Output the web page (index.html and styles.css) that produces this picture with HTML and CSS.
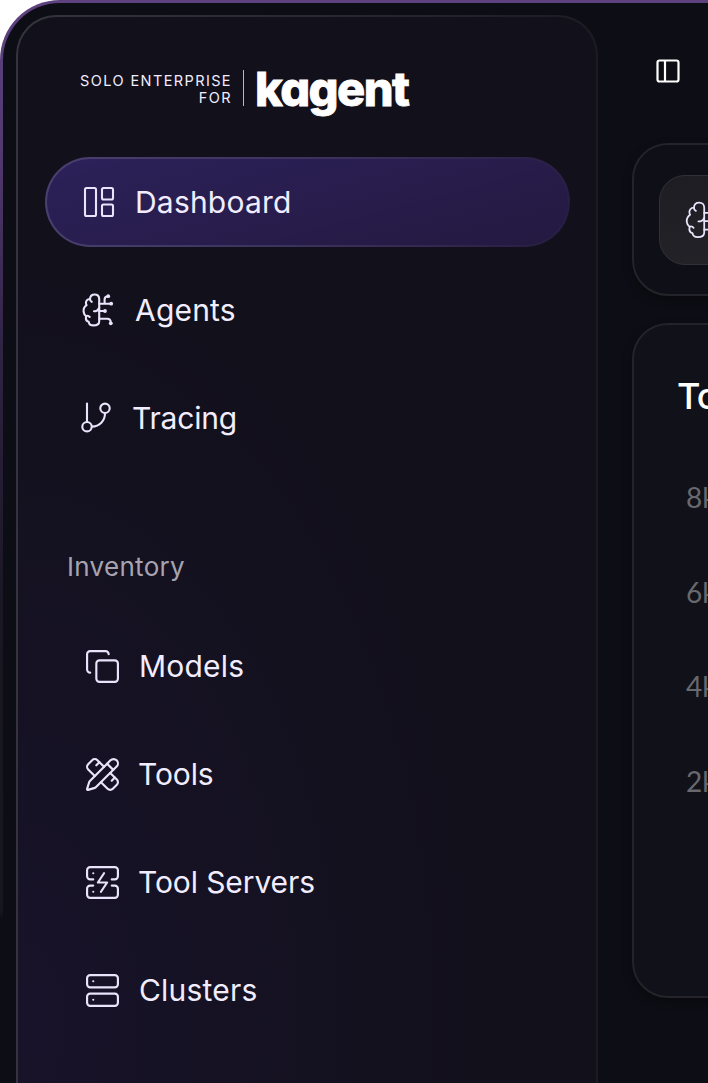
FILE: index.html
```html
<!DOCTYPE html>
<html lang="en">

<head>
    <meta charset="UTF-8">
    <meta name="viewport" content="width=device-width, initial-scale=1.0">
    <title>kagent</title>
    <link rel="stylesheet" href="styles.css">
</head>

<body>
    <!-- Shared brain icon -->
    <svg class="symbols" width="0" height="0">
        <symbol id="brain" viewBox="0 0 34 34">
            <path d="M17.2 6C17.2 3 15.4 1.5 12.7 1.5S8.2 3.2 8 6C5.2 6 3.5 8 4 10.8c.1.6.3 1 .6 1.4C2.5 13.6 1.3 16 1.6 18.7c.2 2 1 3.4 2.5 4.4C3.5 26.2 4.5 28.2 6.7 28.8 7 31.2 8.9 32.4 11.4 32.4c3.5 0 5.8-1.3 5.8-4.2z" />
            <path d="M8 6c0 1.4.6 2.3 1.7 2.8M4.1 23.1c1.2-.6 2.5-.4 3.6.9M12 18.3c2.8 0 4.3-1.4 5.2-3.3M17.2 10.7H29M22.6 10.7V6.5c0-2 1-3 2.8-3M17.2 18h5.5M17.2 25.7h8c2.7 0 3.6 1.3 3.6 4.3" />
            <g class="dots">
                <circle cx="29.2" cy="10.7" r="1.9" />
                <circle cx="26.2" cy="3.2" r="1.9" />
                <circle cx="23" cy="18" r="1.9" />
                <circle cx="28.8" cy="30.3" r="1.9" />
            </g>
        </symbol>
    </svg>

    <div class="frame">
        <div class="app">
            <aside class="sidebar">
                <div class="logo">
                    <div class="logo-small">SOLO ENTERPRISE<br>FOR</div>
                    <div class="logo-line"></div>
                    <div class="logo-name">kagent</div>
                </div>

                <nav class="nav">
                    <a class="nav-item active">
                        <svg class="icon" width="34" height="34" viewBox="0 0 34 34">
                            <rect x="3" y="3" width="11" height="28" rx="1.5" />
                            <rect x="20" y="3" width="11" height="11.5" rx="1.5" />
                            <rect x="20" y="19.5" width="11" height="11.5" rx="1.5" />
                        </svg>
                        <span>Dashboard</span>
                    </a>
                    <a class="nav-item">
                        <svg class="icon" width="34" height="34">
                            <use href="#brain" />
                        </svg>
                        <span>Agents</span>
                    </a>
                    <a class="nav-item tracing">
                        <svg class="icon" width="34" height="34" viewBox="0 0 34 34">
                            <path d="M8 2.5v18.3M26 12.3c0 7.5-5.5 13.3-13 13.3" />
                            <circle cx="8" cy="25.7" r="4.7" />
                            <circle cx="26" cy="7.3" r="4.7" />
                        </svg>
                        <span>Tracing</span>
                    </a>
                </nav>

                <h2 class="nav-title">Inventory</h2>

                <nav class="nav inventory">
                    <a class="nav-item">
                        <svg class="icon" width="37" height="37" viewBox="0 0 24 24">
                            <rect x="8" y="8" width="14" height="14" rx="2" />
                            <path d="M4 16c-1.1 0-2-.9-2-2V4c0-1.1.9-2 2-2h10c1.1 0 2 .9 2 2" />
                        </svg>
                        <span>Models</span>
                    </a>
                    <a class="nav-item tools">
                        <svg class="icon" width="37" height="37" viewBox="0 0 24 24">
                            <path d="M13 7 8.7 2.7a2.41 2.41 0 0 0-3.4 0L2.7 5.3a2.41 2.41 0 0 0 0 3.4L7 13" />
                            <path d="m8 6 2-2M18 16l2-2" />
                            <path d="m17 11 4.3 4.3c.94.94.94 2.46 0 3.4l-2.6 2.6c-.94.94-2.46.94-3.4 0L11 17" />
                            <path d="M21.174 6.812a1 1 0 0 0-3.986-3.987L3.842 16.174a2 2 0 0 0-.5.83l-1.321 4.352a.5.5 0 0 0 .623.622l4.353-1.32a2 2 0 0 0 .83-.497z" />
                            <path d="m15 5 4 4" />
                        </svg>
                        <span>Tools</span>
                    </a>
                    <a class="nav-item tools">
                        <svg class="icon" width="37" height="37" viewBox="0 0 24 24">
                            <path d="M6 10H4a2 2 0 0 1-2-2V4a2 2 0 0 1 2-2h16a2 2 0 0 1 2 2v4a2 2 0 0 1-2 2h-2" />
                            <path d="M6 14H4a2 2 0 0 0-2 2v4a2 2 0 0 0 2 2h16a2 2 0 0 0 2-2v-4a2 2 0 0 0-2-2h-2" />
                            <path d="M6 6h.01M6 18h.01M13 6l-4 6h6l-4 6" />
                        </svg>
                        <span>Tool Servers</span>
                    </a>
                    <a class="nav-item">
                        <svg class="icon" width="37" height="37" viewBox="0 0 24 24">
                            <rect x="2" y="2" width="20" height="8" rx="2" />
                            <rect x="2" y="14" width="20" height="8" rx="2" />
                            <path d="M6 6h.01M6 18h.01" />
                        </svg>
                        <span>Clusters</span>
                    </a>
                </nav>
            </aside>

            <main class="content">
                <svg class="toggle" width="24" height="24" viewBox="0 0 24 24">
                    <rect x="1.5" y="1.5" width="21" height="21" rx="2" />
                    <path d="M9 1.5v21" />
                </svg>

                <section class="card stats">
                    <div class="stat-icon">
                        <svg class="icon" width="38" height="38">
                            <use href="#brain" />
                        </svg>
                    </div>
                </section>

                <section class="card chart">
                    <h1 class="chart-title">To</h1>
                    <div class="axis">
                        <span>8k</span>
                        <span>6k</span>
                        <span>4k</span>
                        <span>2k</span>
                    </div>
                </section>
            </main>
        </div>
    </div>
</body>

</html>
```
FILE: styles.css
```css
* {
    box-sizing: border-box;
}

body {
    margin: 0;
    background: #fff;
    font-family: Inter, "Liberation Sans", sans-serif;
    color: #f1edff;
    overflow: hidden;
}

.symbols {
    display: block;
    height: 0;
}

.frame {
    height: 1083px;
    padding: 3px 0 0 3px;
    border-radius: 60px 0 0 0;
    background: linear-gradient(180deg, #5e4280 0, #52396f 150px, #302343 350px, #1b1725 600px, #17171d 910px, #0d0d14 920px);
    overflow: hidden;
}

.app {
    display: flex;
    height: 1080px;
    border-radius: 57px 0 0 0;
    background: #0d0d15;
    overflow: hidden;
}

/* Sidebar */
.sidebar {
    flex: none;
    width: 582px;
    height: 1120px;
    margin: 12px 0 0 13px;
    border: 2px solid transparent;
    border-radius: 40px;
    background:
        radial-gradient(ellipse 460px 760px at 0 90%, #18132a 0%, #12101b 100%) padding-box,
        linear-gradient(90deg, #35333d 0%, #25242c 70%, #1c1b23 100%) border-box;
}

.logo {
    display: flex;
    height: 66px;
    margin: 43px 0 0 62px;
}

.logo-small {
    width: 152px;
    padding-top: 13px;
    font-size: 14.5px;
    line-height: 16.5px;
    letter-spacing: 1.4px;
    text-align: right;
    white-space: nowrap;
}

.logo-line {
    width: 1px;
    height: 36px;
    margin: 10px 13px 0 11px;
    background: #b9b7c0;
}

.logo-name {
    margin-left: -2px;
    font-size: 47px;
    font-weight: 800;
    line-height: 58px;
    letter-spacing: -1.6px;
    color: #fff;
    font-feature-settings: "cv11";
    -webkit-text-stroke: 0.8px #fff;
}

.nav {
    display: flex;
    flex-direction: column;
    gap: 18px;
    margin: 31px 26px 0 27px;
}

.nav-item {
    display: flex;
    align-items: center;
    gap: 19px;
    height: 90px;
    padding-left: 35px;
    border: 2px solid transparent;
    border-radius: 45px;
    font-size: 30px;
    line-height: 40px;
    letter-spacing: 0.2px;
}

.nav-item.active {
    background:
        linear-gradient(165deg, #2c2159, #241940) padding-box,
        linear-gradient(110deg, #4a4070, #3c325e 50%, #271d42) border-box;
}

.nav-item.tracing {
    padding-left: 32px;
    letter-spacing: -0.2px;
}

.icon {
    flex: none;
    fill: none;
    stroke: #e9e3fb;
    stroke-width: 2.1;
    stroke-linecap: round;
    stroke-linejoin: round;
}

.dots {
    fill: #e9e3fb;
    stroke: none;
}

.nav-title {
    margin: 86px 0 0 49px;
    font-size: 26px;
    font-weight: 400;
    line-height: 36px;
    letter-spacing: 0.3px;
    color: #a6a4b0;
}

.inventory {
    margin-top: 36px;
}

.inventory .nav-item {
    padding-left: 37px;
    gap: 18px;
    letter-spacing: 0.2px;
}

.inventory .nav-item.tools {
    gap: 17px;
    letter-spacing: -0.1px;
}

.inventory .icon {
    stroke-width: 1.4;
}

/* Content */
.content {
    flex: 1;
    min-width: 0;
    padding: 56px 0 0 34px;
}

.toggle {
    display: block;
    margin-left: 24px;
    fill: none;
    stroke: #fff;
    stroke-width: 2.2;
}

.card {
    width: 300px;
    border: 2px solid #232329;
    border-radius: 36px;
    background: #0f0f17;
    box-shadow: 0 4px 10px rgba(0, 0, 0, 0.35);
}

.stats {
    height: 153px;
    margin-top: 60px;
    padding: 30px 0 0 25px;
}

.stat-icon {
    display: flex;
    align-items: center;
    width: 90px;
    height: 90px;
    padding-left: 25px;
    border: 1.5px solid #303035;
    border-radius: 26px;
    background: linear-gradient(180deg, #1d1d23, #222227);
}

.stat-icon .icon {
    stroke-width: 1.6;
}

.chart {
    height: 675px;
    margin-top: 27px;
    padding: 49px 0 0 43px;
    background: #111119;
}

.chart-title {
    margin: 0;
    font-size: 36px;
    font-weight: 500;
    line-height: 44px;
    letter-spacing: -1px;
    color: #fff;
}

.axis {
    display: flex;
    flex-direction: column;
    gap: 54.5px;
    padding: 59px 0 0 9px;
    font-family: Lato, Inter, sans-serif;
    font-size: 28px;
    line-height: 40px;
    color: #68686e;
}
```
